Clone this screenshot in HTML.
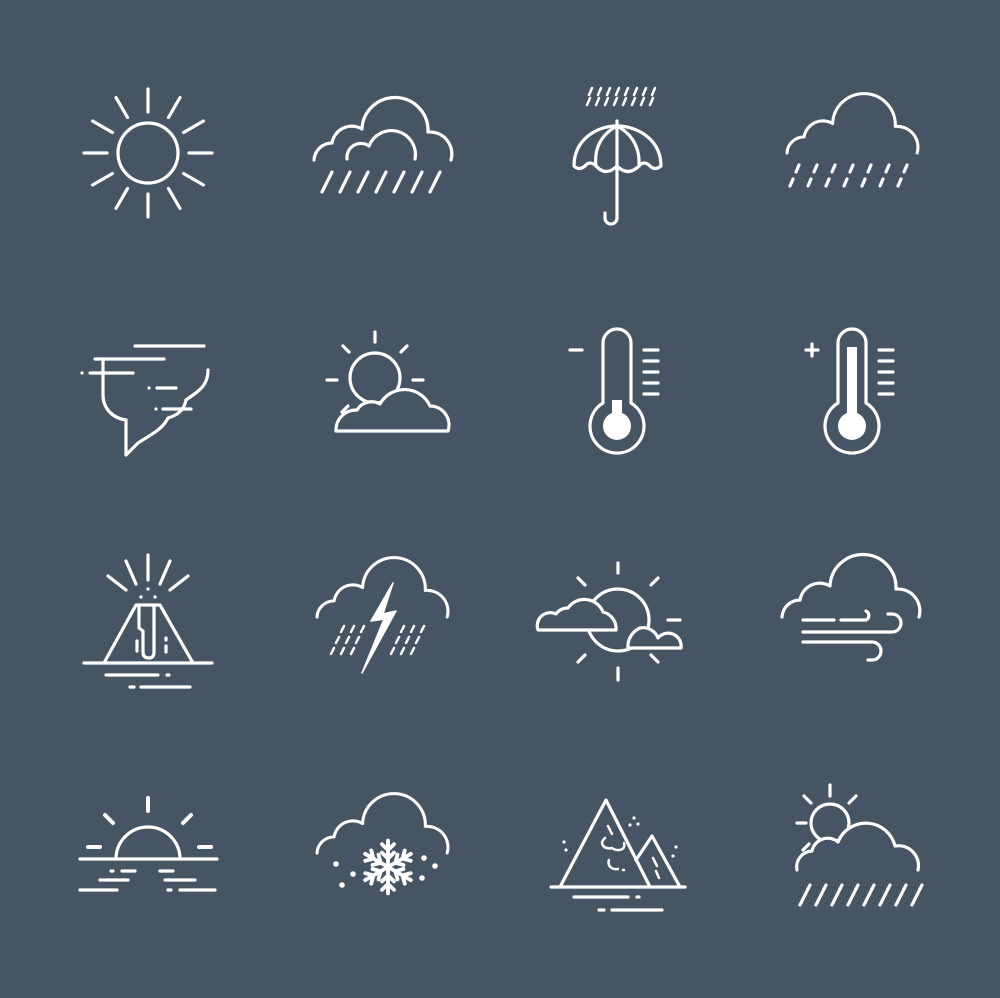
<!DOCTYPE html>
<html><head><meta charset="utf-8"><style>
html,body{margin:0;padding:0;background:#465563;}
svg{display:block}
</style></head><body>
<svg width="1000" height="998" viewBox="0 0 1000 998" xmlns="http://www.w3.org/2000/svg">
<rect width="1000" height="998" fill="#465563"/>
<defs>
<path id="cl" d="M0,0 A18,18 0 0 1 18,-17 A20,20 0 0 1 48,-31 A33,33 0 0 1 114,-28 A22,22 0 0 1 137,0"/>
</defs>
<g fill="none" stroke="#fff" stroke-width="3.2" stroke-linecap="round" stroke-linejoin="round">
<!-- Sun -->
<circle cx="148" cy="153" r="30"/>
<g transform="translate(148,153)">
<g id="ray"><line x1="0" y1="-41" x2="0" y2="-64"/></g>
<use href="#ray" transform="rotate(30)"/><use href="#ray" transform="rotate(60)"/><use href="#ray" transform="rotate(90)"/>
<use href="#ray" transform="rotate(120)"/><use href="#ray" transform="rotate(150)"/><use href="#ray" transform="rotate(180)"/>
<use href="#ray" transform="rotate(210)"/><use href="#ray" transform="rotate(240)"/><use href="#ray" transform="rotate(270)"/>
<use href="#ray" transform="rotate(300)"/><use href="#ray" transform="rotate(330)"/>
</g>
<!-- Cloud rain double -->
<use href="#cl" transform="translate(314,160)"/>
<path d="M347,159 A14,14 0 0 1 369,146 A24,24 0 0 1 415,159"/>
<path d="M332,172 L322,192 M350,172 L340,192 M368,172 L358,192 M386,172 L376,192 M404,172 L394,192 M422,172 L412,192 M440,172 L430,192"/>
<!-- Umbrella -->
<path stroke-width="2.5" d="M592,88 L589,95 M601,88 L598,95 M610,88 L607,95 M619,88 L616,95 M628,88 L625,95 M637,88 L634,95 M646,88 L643,95 M655,88 L652,95 M590,98 L587,105 M599,98 L596,105 M608,98 L605,105 M617,98 L614,105 M626,98 L623,105 M635,98 L632,105 M644,98 L641,105 M653,98 L650,105"/>
<path d="M574,166 C574,140 596,126 617,126 C638,126 661,140 661,166 Q655,171 650,166 Q644,160 639,166 Q628,177 617,166 Q606,177 596,166 Q590,160 585,166 Q579,171 574,166 Z"/>
<path d="M617,126 C600,135 594,150 596,166 M617,126 C634,135 640,150 639,166"/>
<path d="M617,121 L617,218 A6,6 0 0 1 605,218 L605,213"/>
<!-- Cloud light rain -->
<use href="#cl" transform="translate(787,153) scale(0.95)"/>
<path d="M799,165 L796,172 M817,165 L814,172 M835,165 L832,172 M853,165 L850,172 M871,165 L868,172 M889,165 L886,172 M907,165 L904,172 M793,179 L790,186 M811,179 L808,186 M829,179 L826,186 M847,179 L844,186 M865,179 L862,186 M883,179 L880,186 M901,179 L898,186"/>
<!-- Tornado -->
<path d="M135,346 L204,346 M95,359 L164,359 M90,373 L133,373 M82,373 L82,373 M157,388 L176,388 M149,388 L149,388 M163,409 L191,409 M156,409 L156,409"/>
<path d="M103,359 L103,395 C103,408 112,418 126,420 L126,455 L138,443 C150,435 162,430 168,418 C178,415 184,410 186,400 C195,393 208,388 208,370"/>
<!-- Sun behind cloud -->
<circle cx="375" cy="378" r="25"/>
<path d="M375,332 L375,342 M343,346 L349,352 M407,346 L401,352 M327,380 L337,380 M413,380 L423,380 M342,412 L348,406"/>
<path fill="#465563" d="M336,431 A20,20 0 0 1 357,410 A17,17 0 0 1 380,404 A28,28 0 0 1 430,406 A19,19 0 0 1 448,431 Z"/>
<!-- Thermometer cold -->
<path d="M603,403 L603,343 A14,14 0 0 1 631,343 L631,403 A27,27 0 1 1 603,403 Z"/>
<line x1="570" y1="350" x2="582" y2="350"/>
<path d="M644,350 L658,350 M644,361 L658,361 M644,372 L658,372 M644,383 L658,383 M644,394 L658,394"/>
<g fill="#fff" stroke="none"><circle cx="617" cy="426" r="14"/><rect x="612" y="400" width="10" height="16"/></g>
<!-- Thermometer hot -->
<path d="M838,403 L838,343 A14,14 0 0 1 866,343 L866,403 A27,27 0 1 1 838,403 Z"/>
<path d="M806,350 L818,350 M812,344 L812,356"/>
<path d="M879,350 L893,350 M879,361 L893,361 M879,372 L893,372 M879,383 L893,383 M879,394 L893,394"/>
<g fill="#fff" stroke="none"><circle cx="852" cy="426" r="14"/><rect x="847" y="347" width="10" height="70"/></g>
<!-- Volcano -->
<path d="M148,555 L148,580 M126,561 L136,584 M170,561 L160,584 M108,576 L126,590 M188,576 L170,590"/>
<path d="M141,597 L141,597 M155,597 L155,597 M148,589 L148,589"/>
<path d="M104,663 L136,605 L160,605 L193,663"/>
<path d="M84,663 L212,663 M106,675 L158,675 M167,675 L169,675 M130,687 L134,687 M141,687 L190,687"/>
<path d="M139,605 L139,628 L143,631 L143,652 Q143,658 149,658 Q154,658 154,652 L154,605 M137,641 L137,651 M166,638 L166,640 M166,646 L166,652"/>
<!-- Thunderstorm -->
<use href="#cl" transform="translate(317,617) scale(0.95)"/>
<path fill="#fff" stroke-width="1.5" d="M393,583 L371,621 L384,619 L362,673 L396,611 L383,614 Z"/>
<path stroke-width="2.5" d="M344,626 L341,632 M354,626 L351,632 M364,626 L361,632 M339,637 L336,643 M349,637 L346,643 M359,637 L356,643 M334,648 L331,654 M344,648 L341,654 M354,648 L351,654 M404,626 L401,632 M414,626 L411,632 M424,626 L421,632 M399,637 L396,643 M409,637 L406,643 M419,637 L416,643 M394,648 L391,654 M404,648 L401,654 M414,648 L411,654"/>
<!-- Sun with two clouds -->
<circle cx="618" cy="620" r="31"/>
<path d="M618,563 L618,573 M618,668 L618,680 M578,578 L585,585 M658,578 L651,585 M668,620 L680,620 M578,662 L585,655 M658,662 L651,655"/>
<path fill="#465563" d="M538,630 A13,13 0 0 1 556,614 A14,14 0 0 1 568,608 A20,20 0 0 1 603,612 A17,17 0 0 1 616,630 Z"/>
<path fill="#465563" d="M628,648 A20,20 0 0 1 640,628 A16,16 0 0 1 658,638 A13,13 0 0 1 681,648 Z"/>
<!-- Windy cloud -->
<use href="#cl" transform="translate(782,617) scale(1.0)"/>
<path d="M803,620 L834,620 M841,620 L866,620 A5,5 0 0 0 866,611 M803,632 L892,632 A9,9 0 0 0 892,614 L888,614 M803,642 L872,642 A9,9 0 0 1 872,660 L868,660"/>
<!-- Sunrise -->
<path d="M116,859 A32,32 0 0 1 180,859 M80,859 L217,859"/>
<path stroke-width="4" d="M148,798 L148,811 M105,815 L113,823 M191,815 L183,823 M88,847 L100,847 M199,847 L211,847"/>
<path d="M111,871 L113,871 M122,871 L135,871 M160,871 L173,871 M100,880 L128,880 M165,880 L195,880 M80,890 L117,890 M168,890 L171,890 M180,890 L215,890"/>
<!-- Snow cloud -->
<use href="#cl" transform="translate(317,853) scale(0.95)"/>
<g transform="translate(388,867) scale(1.2)">
<g id="arm"><path d="M0,0 L0,-22 M-5,-19 L0,-14 L5,-19 M-5,-12 L0,-7 L5,-12"/></g>
<use href="#arm" transform="rotate(60)"/><use href="#arm" transform="rotate(120)"/><use href="#arm" transform="rotate(180)"/><use href="#arm" transform="rotate(240)"/><use href="#arm" transform="rotate(300)"/>
</g>
<g fill="#fff" stroke="none"><circle cx="336" cy="864" r="2.8"/><circle cx="353" cy="874" r="2.8"/><circle cx="342" cy="885" r="2.8"/><circle cx="424" cy="858" r="2.8"/><circle cx="435" cy="866" r="2.8"/><circle cx="422" cy="878" r="2.8"/></g>
<!-- Mountains -->
<path d="M560,887 L606,800 L650,887 M636,860 L652,836 L680,887 M551,887 L685,887"/>
<path d="M574,897 L628,897 M637,897 L639,897 M599,910 L604,910 M612,910 L662,910"/>
<path stroke-width="2.5" d="M608,826 L612,834 M605,838 C598,844 605,850 612,848 C618,852 626,850 624,843 M609,860 C607,866 612,870 618,869 M623,870 L624,870 M653,858 L657,866 M656,871 L659,878"/>
<path d="M564,842 L564,842 M566,850 L566,850 M676,847 L676,847 M673,856 L673,856 M634,818 L634,818 M630,825 L630,825 M638,824 L638,824"/>
<!-- Sun cloud rain -->
<circle cx="830" cy="823" r="19"/>
<path d="M830,785 L830,796 M804,796 L811,803 M856,796 L849,803 M797,823 L806,823 M803,850 L809,844"/>
<path fill="#465563" d="M797,870 A16,16 0 0 1 812,851 A16,16 0 0 1 838,842 A30,30 0 0 1 895,846 A20,20 0 0 1 918,870"/>
<path d="M810,885 L800,905 M826,885 L816,905 M842,885 L832,905 M858,885 L848,905 M874,885 L864,905 M890,885 L880,905 M906,885 L896,905 M922,885 L912,905"/>
</g>
</svg>
</body></html>
